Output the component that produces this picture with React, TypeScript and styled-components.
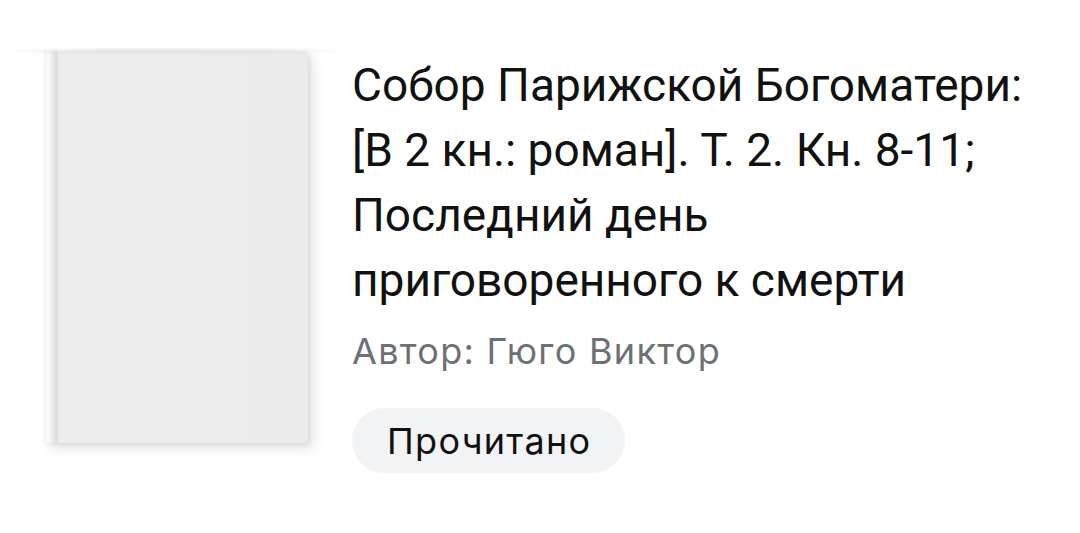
import styled, { createGlobalStyle } from 'styled-components';

const GlobalStyle = createGlobalStyle`
  body {
    margin: 0;
    background: #ffffff;
  }
`;

const Card = styled.div`
  display: flex;
  align-items: flex-start;
  gap: 44px;
  padding: 51px 0 0 44px;
`;

const CoverWrap = styled.div`
  position: relative;
  flex-shrink: 0;
`;

const TopGlare = styled.div`
  position: absolute;
  top: -2px;
  left: -44px;
  width: 344px;
  height: 4px;
  background: linear-gradient(to right, rgba(230, 230, 230, 0) 0%, rgba(225, 225, 225, 0.8) 30%, rgba(225, 225, 225, 0.8) 75%, rgba(230, 230, 230, 0) 100%);
  filter: blur(1px);
`;

const Cover = styled.div`
  width: 264px;
  height: 392px;
  border-radius: 0 4px 4px 0;
  background: linear-gradient(to right, #f3f3f3 0px, #fbfbfb 4px, #e6e6e6 10px, #d9d9d9 13px, #ededed 14px, #ebebeb 100%);
  box-shadow: 6px 6px 12px rgba(0, 0, 0, 0.1), 2px 2px 4px rgba(0, 0, 0, 0.06);
`;

const Info = styled.div`
  display: flex;
  flex-direction: column;
  padding-top: 2px;
`;

const Title = styled.h1`
  margin: 0;
  font-family: Roboto, 'Noto Sans', sans-serif;
  font-weight: 400;
  font-size: 46px;
  line-height: 65px;
  color: #111111;
  max-width: 690px;
`;

const Author = styled.div`
  margin-top: 16px;
  font-family: Inter, 'Noto Sans', sans-serif;
  font-size: 36px;
  line-height: 44px;
  letter-spacing: 1.3px;
  color: #6d7075;
`;

const Status = styled.button`
  align-self: flex-start;
  margin-top: 35px;
  height: 65px;
  padding: 0 34px 0 35px;
  border: none;
  border-radius: 33px;
  background: #f2f3f5;
  font-family: Inter, 'Noto Sans', sans-serif;
  font-size: 36px;
  letter-spacing: 1.3px;
  color: #111111;
`;

export default function App() {
  return (
    <>
      <GlobalStyle />
      <Card>
        <CoverWrap>
          <TopGlare />
          <Cover />
        </CoverWrap>
        <Info>
          <Title>
            Собор Парижской Богоматери: [В 2 кн.: роман]. Т. 2. Кн. 8-11; Последний день приговоренного к смерти
          </Title>
          <Author>Автор: Гюго Виктор</Author>
          <Status>Прочитано</Status>
        </Info>
      </Card>
    </>
  );
}
